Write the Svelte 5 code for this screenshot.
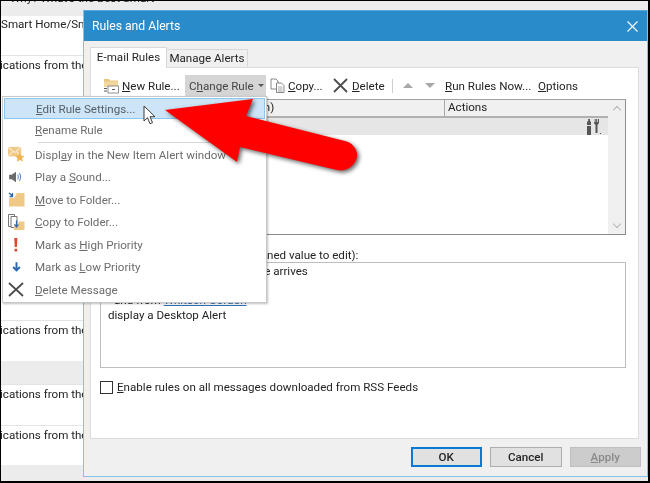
<script>
  const menuItems = [
    { key: "mail", pre: "Displ", u: "a", post: "y in the New Item Alert window" },
    { key: "sound", pre: "Play a ", u: "S", post: "ound..." },
    { key: "move", pre: "", u: "M", post: "ove to Folder..." },
    { key: "copy", pre: "", u: "C", post: "opy to Folder..." },
    { key: "high", pre: "Mark as ", u: "H", post: "igh Priority" },
    { key: "low", pre: "Mark as ", u: "L", post: "ow Priority" },
    { key: "delete", pre: "", u: "D", post: "elete Message" },
  ]
</script>

<div class="screen">
  <div class="backdrop">
    <div class="band top-band"><span>Why? What's the Best Smart</span></div>
    <div class="row first"><span>Smart Home/Smart</span></div>
    <div class="row second"><span>ications from the</span></div>
    <div class="row third"><span>ications from the</span></div>
    <div class="band mid-band"></div>
    <div class="row fourth"><span>ications from the</span></div>
    <div class="row fifth"><span>ications from the</span></div>
    <div class="band end-band"></div>
  </div>

  <section class="dialog">
    <header class="titlebar">
      <span>Rules and Alerts</span>
      <svg class="close" width="11" height="11" viewBox="0 0 11 11"><path d="M.5.5l10 10M10.500.5l-10 10" stroke="#fff" stroke-width="1.100" fill="none"/></svg>
    </header>

    <div class="tabs">
      <div class="tab active">E-mail Rules</div>
      <div class="tab">Manage Alerts</div>
    </div>

    <div class="panel">
      <div class="toolbar">
        <button class="tool new-rule">
          <svg width="16" height="16" viewBox="0 0 16 16">
            <path d="M1 1h5l1 1.500h8V9H1z" fill="#e9c583"/>
            <path d="M1 3.500h14V9H1z" fill="#f2d79f"/>
            <rect x="5" y="8" width="10.500" height="7" fill="#fff" stroke="#777" stroke-width=".8"/>
            <path d="M9 11.500h3M1 10.500h3M1 13h3" stroke="#555" stroke-width="1"/>
          </svg>
          <span><u>N</u>ew Rule...</span>
        </button>
        <button class="tool change"><span>C<u>h</u>ange Rule</span><i class="caret"></i></button>
        <button class="tool copy">
          <svg width="15" height="15" viewBox="0 0 15 15" fill="#fff" stroke="#7a7a7a" stroke-width=".9">
            <path d="M1 1h5l2 2v8H1z"/>
            <path d="M6.500 5h5l2.500 2.500V14.500H6.500z"/>
            <path d="M8 9h4.500M8 11h4.500M8 13h4.500" stroke="#999"/>
          </svg>
          <span><u>C</u>opy...</span>
        </button>
        <button class="tool remove">
          <svg width="15" height="15" viewBox="0 0 15 15"><path d="M1 1l13 13M14 1L1 14" stroke="#4d4d4d" stroke-width="1.800" fill="none"/></svg>
          <span><u>D</u>elete</span>
        </button>
        <i class="sep"></i>
        <i class="tri up"></i>
        <i class="tri down"></i>
        <button class="tool run"><span><u>R</u>un Rules Now...</span></button>
        <button class="tool options"><span><u>O</u>ptions</span></button>
      </div>

      <div class="rules-list">
        <div class="list-main">
          <div class="list-head">
            <div class="col-rule">Rule (applied in the order shown)</div>
            <div class="col-actions">Actions</div>
          </div>
          <div class="list-row">
            <svg width="16" height="16" viewBox="0 0 16 16" fill="#555">
              <path d="M2.200 0L4 0v2.500h1V6H1V2.500h1.200zM1 7h4v9H1z"/>
              <path d="M8 0v3.500c0 1.300 1 2 1.500 2.200V14h2V5.700c.6-.2 1.500-.9 1.500-2.200V0h-1.200v3h-1V0h-1.500v3h-1V0z"/>
              <path d="M14 14h1v1h-1z"/>
            </svg>
          </div>
        </div>
        <div class="scrollbar">
          <i class="chev"></i>
          <i class="chev flip"></i>
        </div>
      </div>

      <div class="desc-label">Rule description (click an underlined value to edit):</div>
      <div class="desc-box">
        <div class="first-line">Apply this rule after the message arrives</div>
        <div class="indent">&nbsp;</div>
        <div class="indent">and from <a href="#w">Whitson Gordon</a></div>
        <div>display a Desktop Alert</div>
      </div>

      <label class="rss">
        <i class="check"></i>
        <span><u>E</u>nable rules on all messages downloaded from RSS Feeds</span>
      </label>
    </div>

    <footer class="actions">
      <button class="btn primary">OK</button>
      <button class="btn">Cancel</button>
      <button class="btn off"><u>A</u>pply</button>
    </footer>
  </section>

  <div class="menu">
    <div class="item hot"><span class="label"><u>E</u>dit Rule Settings...</span></div>
    <div class="item"><span class="label"><u>R</u>ename Rule</span></div>
    <div class="divider"></div>
    {#each menuItems as m}
      <div class="item">
        <span class="ico">
          {#if m.key === "mail"}
            <svg width="17" height="17" viewBox="0 0 18 18">
              <path d="M0 1h14v10H0z" fill="#efc985"/>
              <path d="M0 1l7 6 7-6M0 11l5-5M14 11L9 6" stroke="#fff" stroke-width="1" fill="none"/>
              <path d="M12.500 7l1.500 3.300 3.500.4-2.600 2.400.7 3.500-3.100-1.800-3.100 1.800.7-3.500-2.600-2.400 3.500-.4z" fill="#eeb552"/>
            </svg>
          {:else if m.key === "sound"}
            <svg width="14" height="12" viewBox="0 0 16 14">
              <path d="M0 4.500h3L8 1v12L3 9.500H0z" fill="#6b6b6b"/>
              <path d="M10 4c1 1.800 1 4.200 0 6M12 2.500c1.700 2.700 1.700 6.300 0 9" stroke="#5d8cc0" stroke-width="1.200" fill="none"/>
            </svg>
          {:else if m.key === "move"}
            <svg width="17" height="15" viewBox="0 0 17 15">
              <path d="M1 6h5l3-5h7.500v13.500H1z" fill="#efc985"/>
              <path d="M1 1l3 2.500M4.500 1v3.500H1.500" stroke="#2a68b0" stroke-width="1.300" fill="none"/>
            </svg>
          {:else if m.key === "copy"}
            <svg width="17" height="17" viewBox="0 0 17 17">
              <path d="M.5.500h6v12h-6z" fill="#fff" stroke="#777"/>
              <path d="M3 2.500h6v11H3z" fill="#fff" stroke="#777"/>
              <path d="M6 10h4l1-2.500h5.500V16H6z" fill="#efc985"/>
              <path d="M8.500 6.500v6M6.500 10.500l2 2.500 2-2.500" stroke="#2a68b0" stroke-width="1.200" fill="none"/>
            </svg>
          {:else if m.key === "high"}
            <svg width="6" height="14" viewBox="0 0 6 14">
              <path d="M1.200 0h3.200l-.5 9H1.700z" fill="#dd4b32"/>
              <path d="M1.500 10.800h2.700v2.700H1.500z" fill="#dd4b32"/>
            </svg>
          {:else if m.key === "low"}
            <svg width="9" height="12" viewBox="0 0 12 13">
              <path d="M6 0v11M1.500 6.500L6 11l4.500-4.500" stroke="#2a68b0" stroke-width="2.600" fill="none"/>
            </svg>
          {:else}
            <svg width="16" height="15" viewBox="0 0 16 15">
              <path d="M1 1l14 13M15 1L1 14" stroke="#4d4d4d" stroke-width="1.800" fill="none"/>
            </svg>
          {/if}
        </span>
        <span class="label">{m.pre}<u>{m.u}</u>{m.post}</span>
      </div>
    {/each}
  </div>

  <svg class="pointer" width="14" height="21" viewBox="0 0 14 21">
    <path d="M1 1v15l3.500-3.300 2.500 6 2.500-1-2.500-6h5z" fill="#fff" stroke="#3a3a3a" stroke-width="1"/>
  </svg>

  <svg class="arrow" width="210" height="90" viewBox="160 94 210 90">
    <path d="M165 110L253 99L246 116L345 141C353 143 358 150 357 157C355 166 346 172 337 170L240 147L237 162Z" fill="#fe0000"/>
  </svg>
</div>

<style>
  :global(body) {
    margin: 0;
    background: #000;
  }

  .screen {
    position: relative;
    width: 647px;
    height: 480px;
    margin: 1px 2px 2px 1px;
    background: #fff;
    overflow: hidden;
    font-family: Roboto, "Noto Sans", sans-serif;
    font-size: 11.6px;
    color: #242424;
    filter: blur(0.3px);
  }

  .backdrop {
    display: flex;
    flex-direction: column;
    height: 100%;
  }

  .band {
    background: #ececec;
    flex: none;
  }

  .top-band {
    height: 15px;
    line-height: 16px;
    overflow: hidden;
    padding-left: 9px;
    white-space: nowrap;
  }

  .top-band span {
    display: block;
    margin-top: -11px;
  }

  .mid-band {
    height: 23px;
  }

  .end-band {
    flex: 1;
  }

  .row {
    flex: none;
    border-top: 1px solid #e4e4e4;
    white-space: nowrap;
    overflow: hidden;
    padding-top: 1px;
    box-sizing: border-box;
    line-height: 16px;
  }

  .row span {
    margin-left: -1px;
  }

  .first { height: 39px; padding-top: 0; border: 0; }
  .first span { margin-left: 0; }
  .second { height: 265px; }
  .third { height: 41px; }
  .fourth { height: 41px; }
  .fifth { height: 40px; }

  /* the dialog floats on top of the mail list */
  .dialog {
    position: absolute;
    left: 82px;
    top: 9px;
    width: 565px;
    height: 467px;
    box-sizing: border-box;
    border: 1px solid #86c1e6;
    border-top: 0;
    background: #f0f0f0;
    display: flex;
    flex-direction: column;
  }

  .titlebar {
    flex: none;
    height: 31px;
    background: #2a8bca;
    border-top: 1px solid #5aa9dc;
    box-sizing: border-box;
    color: #fff;
    font-size: 12.200px;
    display: flex;
    align-items: center;
    justify-content: space-between;
    padding: 0 9px 0 8px;
  }

  .tabs {
    display: flex;
    align-items: flex-end;
    height: 27px;
    flex: none;
    padding-left: 6px;
    margin-bottom: -1px;
  }

  .tab {
    height: 18px;
    line-height: 17px;
    width: 80px;
    text-align: center;
    border: 1px solid #d9d9d9;
    border-bottom: 0;
    box-sizing: content-box;
    white-space: nowrap;
  }

  .tab.active {
    height: 20px;
    background: #fff;
    width: 75px;
    line-height: 19px;
    position: relative;
    z-index: 1;
  }

  .tab + .tab {
    margin-left: -1px;
  }

  .panel {
    flex: none;
    height: 372px;
    margin: 0 8px 0 6px;
    box-sizing: border-box;
    background: #fff;
    border: 1px solid #dcdcdc;
    padding: 7px 12px 0 9px;
    display: flex;
    flex-direction: column;
  }

  .toolbar {
    display: flex;
    align-items: center;
    height: 21px;
    flex: none;
    padding-left: 3px;
  }

  .tool {
    all: unset;
    display: flex;
    align-items: center;
    height: 21px;
    gap: 3px;
    white-space: nowrap;
  }

  .new-rule { width: 82px; }

  .change {
    width: 81px;
    background: #d5d5d5;
    box-sizing: border-box;
    padding-left: 4px;
    color: #444;
    gap: 4px;
  }

  .copy { margin-left: 4px; width: 63px; }

  .remove { gap: 4px; width: 59px; }

  .caret {
    border: 3px solid transparent;
    border-top: 3px solid #555;
    border-bottom: 0;
  }

  .sep {
    width: 1px;
    height: 14px;
    background: #cfcfcf;
  }

  .tri {
    width: 0;
    border-left: 5px solid transparent;
    border-right: 5px solid transparent;
    margin-left: 10px;
  }

  .tri.up { border-bottom: 5px solid #a8a8a8; }
  .tri.down { border-top: 5px solid #a8a8a8; margin-left: 12px; }

  .run { margin-left: 10px; width: 93px; }

  .rules-list {
    flex: none;
    margin-top: 3px;
    height: 134px;
    border: 1px solid;
    border-color: #a0a0a0 #8c8c8c #8c8c8c #b5b5b5;
    display: flex;
  }

  .list-main {
    flex: 1;
  }

  .list-head {
    height: 16px;
    display: flex;
    background: #f0f0f0;
    border-bottom: 2px solid #b0b0b0;
    line-height: 15px;
  }

  .col-rule {
    width: 344px;
    padding-left: 4px;
    box-sizing: border-box;
    border-right: 1px solid #a8a8a8;
    white-space: nowrap;
  }

  .col-actions {
    padding-left: 3px;
  }

  .list-row {
    height: 17px;
    background: #e6e6e6;
    display: flex;
    justify-content: flex-end;
    align-items: center;
    padding-right: 6px;
  }

  .scrollbar {
    width: 17px;
    background: #f0f0f0;
    display: flex;
    flex-direction: column;
    align-items: center;
    justify-content: space-between;
    padding: 7px 0;
  }

  .chev {
    width: 5px;
    height: 5px;
    border-left: 1.500px solid #b5b5b5;
    border-top: 1.500px solid #b5b5b5;
    transform: rotate(45deg);
  }

  .chev.flip {
    transform: rotate(225deg);
  }

  .desc-label {
    flex: none;
    height: 27px;
    line-height: 40px;
    white-space: nowrap;
  }

  .desc-box {
    flex: none;
    height: 106px;
    box-sizing: border-box;
    border: 1px solid #bdbdbd;
    padding: 1px 7px;
    line-height: 14.700px;
  }

  .first-line {
    margin-left: -7px;
  }

  .indent {
    padding-left: 6px;
  }

  .desc-box a {
    color: #2f6fb5;
  }

  .rss {
    display: flex;
    align-items: center;
    gap: 4px;
    margin-top: 12px;
    height: 14px;
    white-space: nowrap;
  }

  .check {
    width: 11px;
    height: 11px;
    border: 1px solid #333;
    background: #fff;
  }

  .actions {
    display: flex;
    justify-content: flex-end;
    gap: 8px;
    padding: 8px 6px 0 0;
  }

  .btn {
    all: unset;
    box-sizing: border-box;
    width: 71.500px;
    height: 20px;
    text-align: center;
    background: #e1e1e1;
    border: 1px solid #adadad;
    line-height: 18px;
    font-weight: 500;
  }

  .btn.primary {
    border: 2px solid #0a78d4;
    line-height: 16px;
  }

  .btn.off {
    background: #cccccc;
    border-color: #bfbfbf;
    color: #8a8a8a;
  }

  /* dropdown opened from the Change Rule button */
  .menu {
    position: absolute;
    left: 1px;
    top: 95px;
    width: 265px;
    height: 207px;
    box-sizing: border-box;
    background: #fff;
    border: 1px solid #c8c8c8;
    box-shadow: 1px 1px 2px rgba(0, 0, 0, 0.25);
    padding: 1px;
    color: #6c6c6c;
  }

  .item {
    display: flex;
    align-items: center;
    height: 22.500px;
    box-sizing: border-box;
  }

  .item.hot {
    height: 21px;
    background: #cde5f6;
    border: 1px solid #8fc6ee;
    color: #55606a;
  }

  .ico {
    width: 31px;
    flex: none;
    display: flex;
    justify-content: center;
    align-items: center;
    padding-right: 7px;
    box-sizing: border-box;
  }

  .label {
    white-space: nowrap;
  }

  .item:not(:has(.ico)) .label {
    margin-left: 31px;
  }

  .divider {
    height: 1px;
    background: #d7d7d7;
    margin: 0 0 1px 34px;
  }

  .pointer {
    position: absolute;
    left: 142px;
    top: 104px;
  }

  .arrow {
    position: absolute;
    left: 159px;
    top: 93px;
    filter: drop-shadow(2px 2px 2px rgba(0, 0, 0, 0.6));
  }

  u {
    text-underline-offset: 1px;
  }
</style>
